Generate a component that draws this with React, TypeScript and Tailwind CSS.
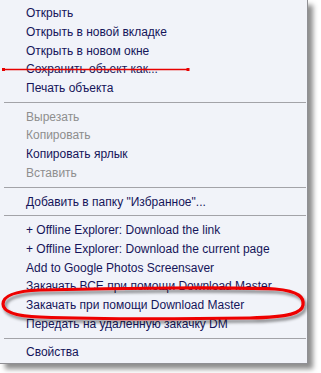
const items: (string | { t: string; off?: boolean } | null)[][] = [
  ["Открыть", "Открыть в новой вкладке", "Открыть в новом окне", "Сохранить объект как...", "Печать объекта"],
  [
    { t: "Вырезать", off: true },
    { t: "Копировать", off: true },
    "Копировать ярлык",
    { t: "Вставить", off: true },
  ],
  ['Добавить в папку "Избранное"...'],
  [
    "+ Offline Explorer: Download the link",
    "+ Offline Explorer: Download the current page",
    "Add to Google Photos Screensaver",
    "Закачать ВСЕ при помощи Download Master",
    "Закачать при помощи Download Master",
    "Передать на удаленную закачку DM",
  ],
  ["Свойства"],
];

const Row = ({ label, off }: { label: string; off?: boolean }) => (
  <div
    className={`flex h-[18.7px] items-center pl-[26px] whitespace-nowrap ${
      off ? "text-[#8e8e8e]" : "text-[#15155a]"
    }`}
  >
    {label}
  </div>
);

const Sep = () => (
  <div className="flex h-[10px] items-center pl-[4px] pr-[1px]">
    <div className="h-px w-full bg-[#a3a3a8]" />
  </div>
);

export default function App() {
  return (
    <div className="relative h-[373px] w-[321px] overflow-hidden bg-white font-['Liberation_Sans',sans-serif] text-[12px]">
      <div className="w-[308px] border-r border-b border-[#8f8f94] bg-[#f1f3f9] pt-[4px] pb-[1px] shadow-[5px_5px_5px_rgba(0,0,0,0.45)]">
        {items.map((group, gi) => (
          <div key={gi}>
            {gi > 0 && <Sep />}
            {group.map((it, i) =>
              typeof it === "string" ? (
                <Row key={i} label={it} />
              ) : it ? (
                <Row key={i} label={it.t} off={it.off} />
              ) : null,
            )}
          </div>
        ))}
      </div>

      {/* red strike-through over "Сохранить объект как..." */}
      <svg className="absolute top-0 left-0" width="321" height="373">
        <line x1="4" y1="69.5" x2="188" y2="69.5" stroke="#e80000" strokeWidth="1.3" />
        <rect x="2" y="68" width="3" height="3" fill="#e80000" />
        <rect x="186.5" y="68" width="3" height="3" fill="#e80000" />
        <defs>
          <filter id="sh" x="-10%" y="-40%" width="120%" height="180%">
            <feDropShadow dx="2" dy="3" stdDeviation="1.6" floodColor="#000" floodOpacity="0.45" />
          </filter>
        </defs>
        <path
          d="M 40 290 C 120 288 230 287 275 289 C 300 291 304 298 303 305 C 302 313 290 317 250 318 C 180 319 90 319 40 317 C 12 316 3 311 3 304 C 3 296 14 291 40 290 Z"
          fill="none"
          stroke="#ee0000"
          strokeWidth="3.2"
          filter="url(#sh)"
        />
      </svg>
    </div>
  );
}
